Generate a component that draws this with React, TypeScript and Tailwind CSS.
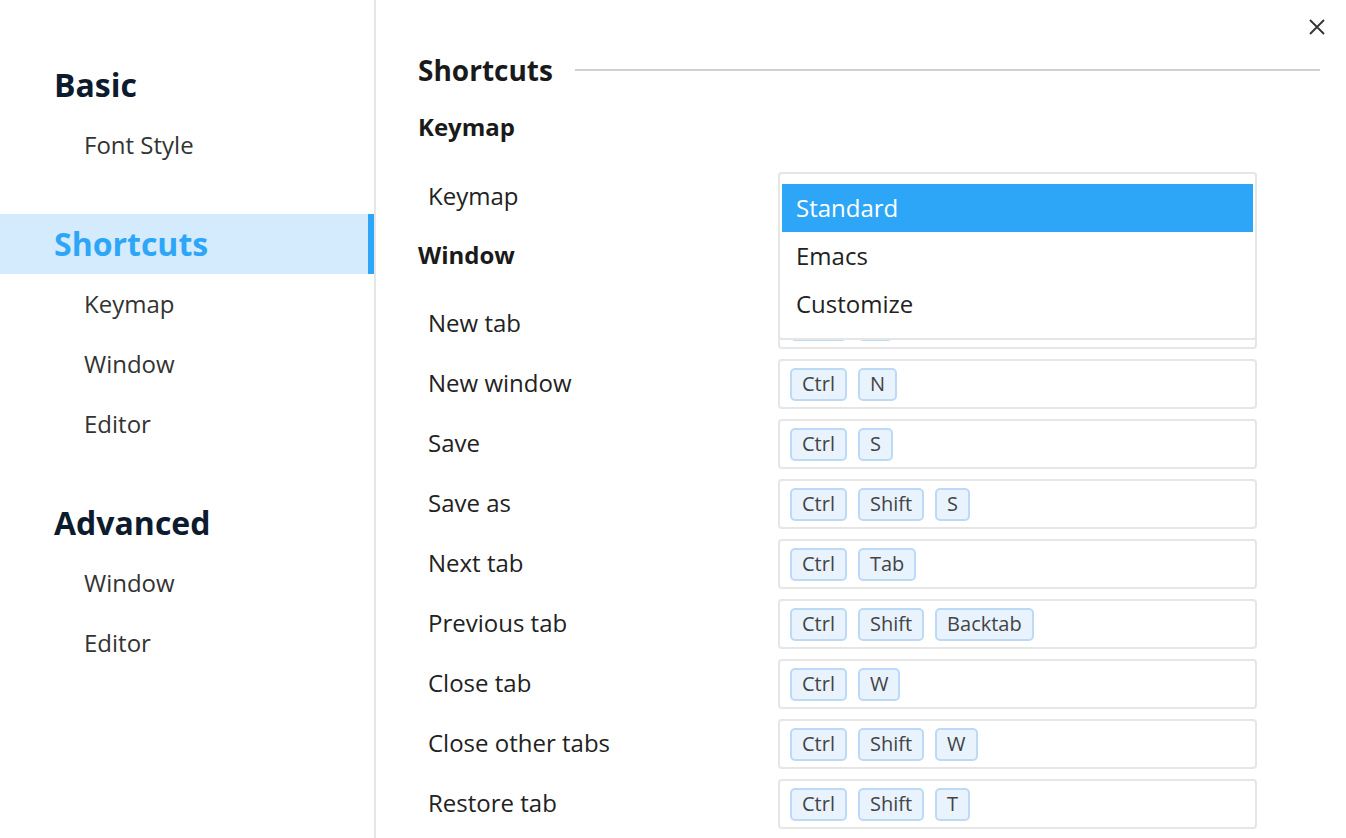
// ─── Data ────────────────────────────────────────────────────

const sections = [
  { title: 'Basic', items: ['Font Style'] },
  { title: 'Shortcuts', items: ['Keymap', 'Window', 'Editor'], active: true },
  { title: 'Advanced', items: ['Window', 'Editor'] },
];

const windowShortcuts: { label: string; keys: string[] }[] = [
  { label: 'New tab', keys: ['Ctrl', 'T'] },
  { label: 'New window', keys: ['Ctrl', 'N'] },
  { label: 'Save', keys: ['Ctrl', 'S'] },
  { label: 'Save as', keys: ['Ctrl', 'Shift', 'S'] },
  { label: 'Next tab', keys: ['Ctrl', 'Tab'] },
  { label: 'Previous tab', keys: ['Ctrl', 'Shift', 'Backtab'] },
  { label: 'Close tab', keys: ['Ctrl', 'W'] },
  { label: 'Close other tabs', keys: ['Ctrl', 'Shift', 'W'] },
  { label: 'Restore tab', keys: ['Ctrl', 'Shift', 'T'] },
];

const keymapOptions = ['Standard', 'Emacs', 'Customize'];

// ─── App ─────────────────────────────────────────────────────

export default function App() {
  return (
    <div
      className="flex h-[838px] w-[1346px] overflow-hidden bg-white"
      style={{ fontFamily: '"Open Sans", "Noto Sans", sans-serif' }}
    >
      {/* Sidebar */}
      <aside className="w-[376px] shrink-0 border-r-2 border-[#e6e6e6] pt-[55px]">
        {sections.map((s, i) => (
          <div key={s.title} className={i > 0 ? 'mt-[39px]' : ''}>
            <div
              className={
                s.active
                  ? 'flex h-[60px] items-center border-r-[6px] border-[#2ea6f7] bg-[#d4eafd] pl-[54px] text-[32px] font-bold text-[#2ea6f7]'
                  : 'flex h-[60px] items-center pl-[54px] text-[32px] font-bold text-[#0d1b2e]'
              }
            >
              {s.title}
            </div>
            {s.items.map(item => (
              <div key={item} className="flex h-[60px] items-center pl-[84px] text-[24px] text-[#333]">
                {item}
              </div>
            ))}
          </div>
        ))}
      </aside>

      {/* Main */}
      <main className="relative flex-1 pl-[42px] pr-[26px] pt-[40px]">
        <button className="absolute right-[21px] top-[19px] text-[#333]">
          <svg width="16" height="16" viewBox="0 0 16 16" fill="none" stroke="currentColor" strokeWidth="1.8">
            <path d="M1 1L15 15M15 1L1 15" />
          </svg>
        </button>

        <div className="flex h-[60px] items-center gap-[22px]">
          <h1 className="text-[28px] font-bold text-[#1a1a1a]">Shortcuts</h1>
          <div className="h-[2px] flex-1 bg-[#d0d0d0]" />
        </div>

        <h2 className="flex h-[54px] items-center text-[24px] font-bold text-[#1a1a1a]">Keymap</h2>

        <div className="mt-[13px] flex h-[60px] items-center">
          <span className="w-[360px] pb-[3px] pl-[10px] text-[24px] text-[#222]">Keymap</span>
          <div className="relative h-[50px] w-[479px]">
            <div className="h-full rounded-[4px] border-2 border-[#e6e6e6]" />
            <ul className="absolute left-0 top-0 z-10 w-full rounded-[4px] border-2 border-[#e6e6e6] bg-white px-[2px] py-[10px]">
              {keymapOptions.map((opt, i) => (
                <li
                  key={opt}
                  className={
                    i === 0
                      ? 'flex h-[48px] items-center bg-[#2ea6f7] pl-[14px] text-[24px] text-white'
                      : 'flex h-[48px] items-center pl-[14px] text-[24px] text-[#222]'
                  }
                >
                  {opt}
                </li>
              ))}
            </ul>
          </div>
        </div>

        <h2 className="flex h-[56px] items-center text-[24px] font-bold text-[#1a1a1a]">Window</h2>

        <div className="mt-[11px]">
          {windowShortcuts.map(row => (
            <div key={row.label} className="flex h-[60px] items-center">
              <span className="w-[360px] pb-[3px] pl-[10px] text-[24px] text-[#222]">{row.label}</span>
              <div className="flex h-[50px] w-[479px] items-center gap-[11px] rounded-[4px] border-2 border-[#e6e6e6] px-[10px]">
                {row.keys.map((k, i) => (
                  <kbd
                    key={i}
                    className="flex h-[33px] items-center rounded-[5px] border-2 border-[#bcdaf5] bg-[#e8f3fe] px-[10px] text-[20px] text-[#444]"
                    style={{ fontFamily: '"Open Sans", "Noto Sans", sans-serif' }}
                  >
                    {k}
                  </kbd>
                ))}
              </div>
            </div>
          ))}
        </div>
      </main>
    </div>
  );
}
